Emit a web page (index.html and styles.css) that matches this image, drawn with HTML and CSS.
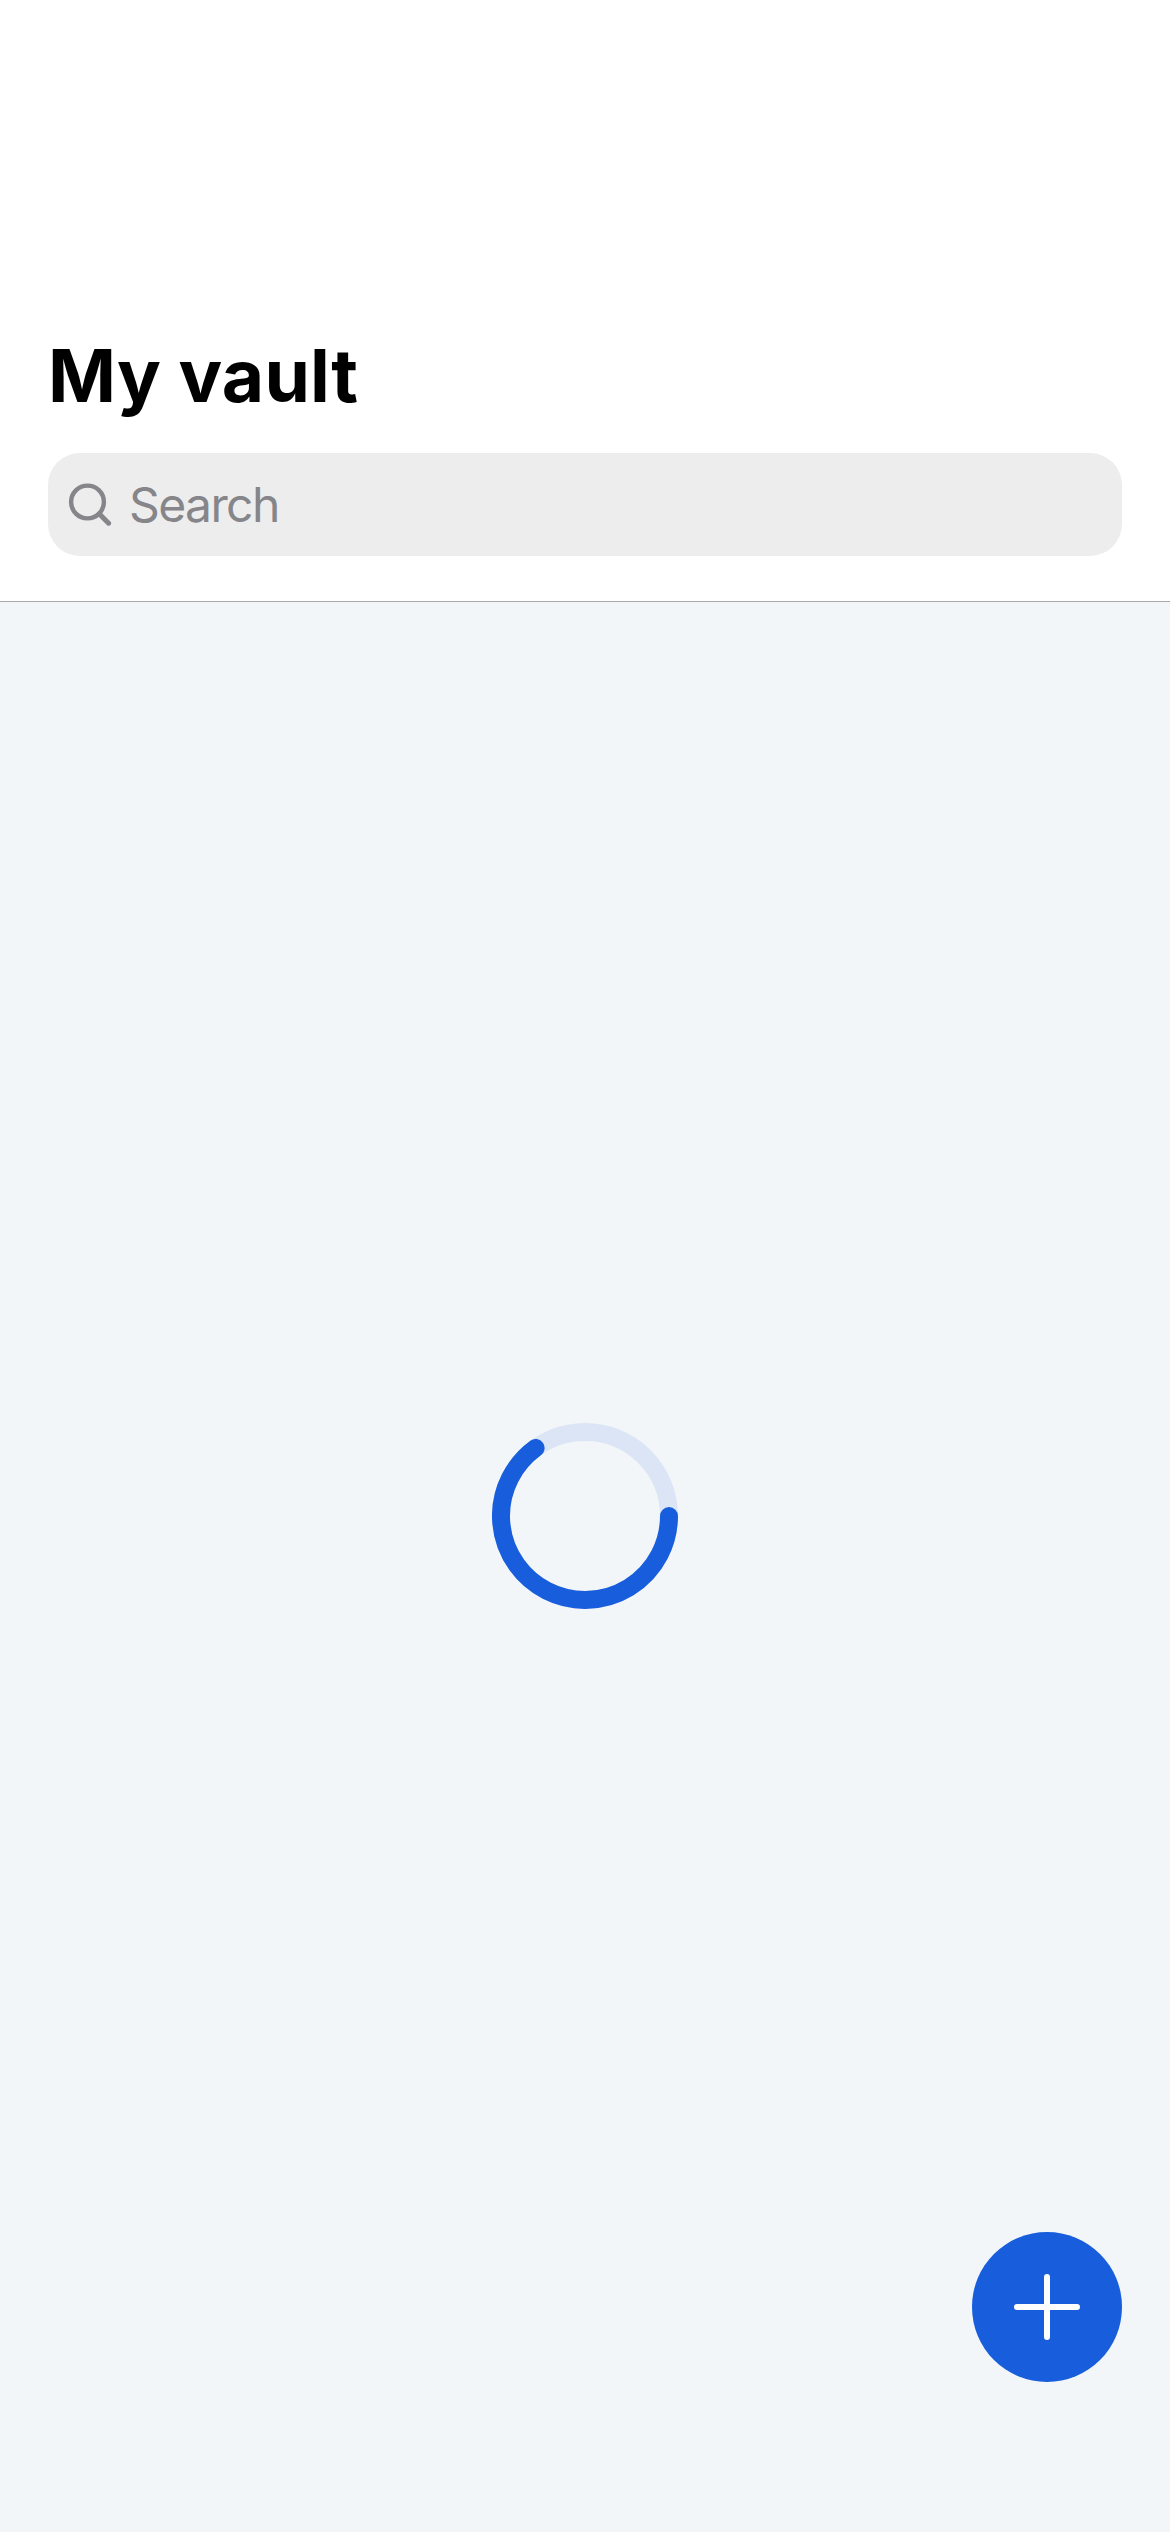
FILE: index.html
```html
<!DOCTYPE html>
<html lang="en">
<head>
<meta charset="utf-8">
<title>My vault</title>
<link rel="stylesheet" href="styles.css">
</head>
<body>
<header class="header">
  <h1 class="title">My vault</h1>
  <div class="search">
    <svg class="search-icon" width="48" height="48" viewBox="0 0 48 48" fill="none" stroke="currentColor" stroke-linecap="round">
      <circle cx="23.5" cy="21" r="16.4" stroke-width="4.4"/>
      <path d="M35.2 32.7 44.6 42.2" stroke-width="5"/>
    </svg>
    <span class="search-label">Search</span>
  </div>
</header>
<main class="content">
  <svg class="spinner" width="186" height="186" viewBox="0 0 186 186" fill="none" stroke-width="18">
    <circle cx="93" cy="93" r="84" stroke="#dce5f6"/>
    <path d="M177 93A84 84 0 1 1 43.6 25" stroke="#175ddc" stroke-linecap="round"/>
  </svg>
  <button class="add" aria-label="Add item">
    <svg width="72" height="72" viewBox="0 0 72 72" fill="none" stroke="#fff" stroke-width="6" stroke-linecap="round">
      <path d="M36 6V66M6 36H66"/>
    </svg>
  </button>
</main>
</body>
</html>
```
FILE: styles.css
```css
* {
  box-sizing: border-box;
}

body {
  margin: 0;
  height: 2532px;
  display: flex;
  flex-direction: column;
  background: #f2f6f9;
  font-family: Inter, "Liberation Sans", sans-serif;
}

.header {
  height: 602px;
  padding: 331px 48px 0;
  background: #fff;
  border-bottom: 1px solid #aaa;
}

.title {
  margin: 0 0 32px;
  height: 90px;
  font-size: 73px;
  font-weight: 700;
  line-height: 90px;
  letter-spacing: 0.2px;
  color: #000;
}

.search {
  display: flex;
  align-items: center;
  height: 103px;
  padding-left: 16px;
  border-radius: 32px;
  background: #ededed;
  color: #85858a;
}

.search-icon {
  flex: none;
}

.search-label {
  margin-left: 17px;
  font-size: 48px;
  line-height: 60px;
  letter-spacing: -1.6px;
}

.content {
  flex: 1;
  display: flex;
  flex-direction: column;
  justify-content: space-between;
  padding: 821px 48px 150px;
}

.spinner {
  align-self: center;
}

.add {
  align-self: flex-end;
  display: flex;
  align-items: center;
  justify-content: center;
  width: 150px;
  height: 150px;
  padding: 0;
  border: 0;
  border-radius: 50%;
  background: #175ddc;
}
```
